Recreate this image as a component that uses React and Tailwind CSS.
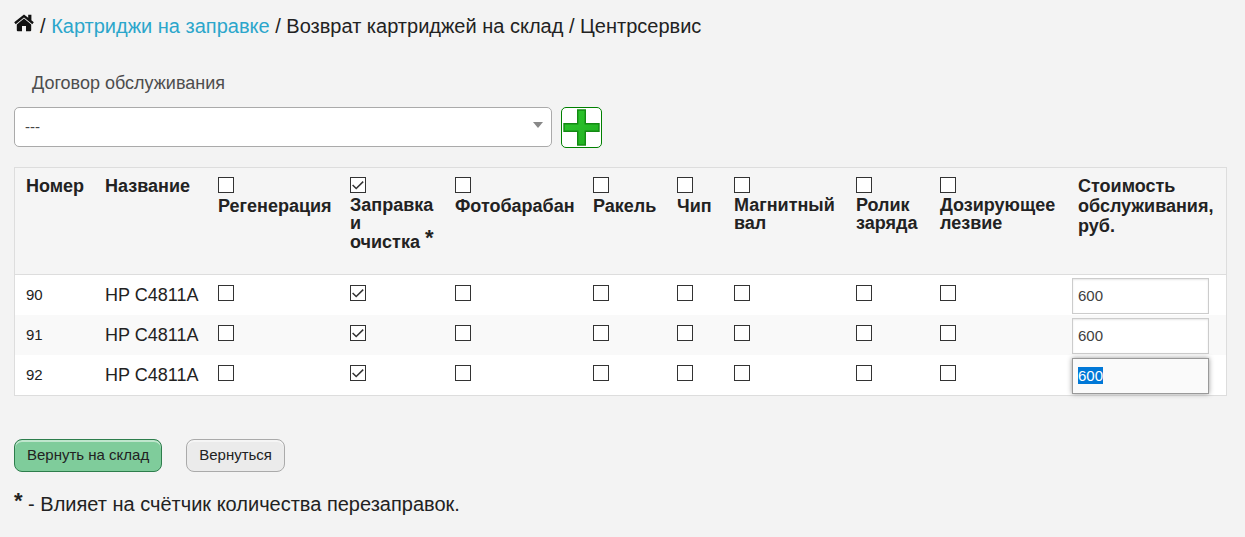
import React, { useEffect, useRef } from 'react';

const services = [
    { id: 'regeneration', label: 'Регенерация',       width: 'w-[132px]', leading: 'leading-5' },
    { id: 'refill',       label: 'Заправка и',        width: 'w-[105px]', leading: 'leading-[18px]', checked: true, marked: 'очистка' },
    { id: 'drum',         label: 'Фотобарабан',       width: 'w-[138px]', leading: 'leading-5' },
    { id: 'blade',        label: 'Ракель',            width: 'w-[84px]',  leading: 'leading-5' },
    { id: 'chip',         label: 'Чип',               width: 'w-[57px]',  leading: 'leading-5' },
    { id: 'magnet',       label: 'Магнитный вал',     width: 'w-[122px]', leading: 'leading-[18px]' },
    { id: 'roller',       label: 'Ролик заряда',      width: 'w-[84px]',  leading: 'leading-[18px]' },
    { id: 'doctor',       label: 'Дозирующее лезвие', width: 'w-[138px]', leading: 'leading-[18px]' },
];

const cartridges = [
    { number: 90, name: 'HP C4811A', cost: 600 },
    { number: 91, name: 'HP C4811A', cost: 600 },
    { number: 92, name: 'HP C4811A', cost: 600 },
];

const HomeIcon = () => (
    <svg viewBox="0 0 20 18" className="w-5 h-[18px]" fill="#111">
        <path d="M10 0.4 L0.2 8.3 L1.7 10.2 L10 3.5 L18.3 10.2 L19.8 8.3 L17.4 6.3 V0.8 H14.2 V3.8 Z" />
        <path d="M10 4.6 L2.8 10.4 V16.2 Q2.8 17.2 3.8 17.2 H8 V12 H12 V17.2 H16.2 Q17.2 17.2 17.2 16.2 V10.4 Z" />
    </svg>
);

const PlusIcon = () => (
    <svg viewBox="0 0 37 37" className="w-[37px] h-[37px]">
        <defs>
            <linearGradient id="plus" x1="0" y1="0" x2="1" y2="1">
                <stop offset="0" stopColor="#2fc82f" />
                <stop offset="1" stopColor="#1fae1f" />
            </linearGradient>
        </defs>
        <path
            d="M14.7 1 H22.3 V14.7 H36 V22.3 H22.3 V36 H14.7 V22.3 H1 V14.7 H14.7 Z"
            fill="url(#plus)"
            stroke="#138a13"
            strokeWidth="1.4"
        />
    </svg>
);

const Checkbox = ({ id, label, checked }) => (
    <span className="grid w-4 h-4">
        <input
            id={id}
            type="checkbox"
            aria-label={label}
            defaultChecked={checked}
            className="peer col-start-1 row-start-1 appearance-none w-4 h-4 border border-[#333] bg-white"
        />
        <svg
            viewBox="0 0 16 16"
            className="col-start-1 row-start-1 w-4 h-4 pointer-events-none invisible peer-checked:visible"
            fill="none"
            stroke="#333"
            strokeWidth="1.5"
        >
            <path d="M2.6 8 L6.2 11.5 L13.2 4.6" />
        </svg>
    </span>
);

// Marks the service that counts as a refill
const Asterisk = () => <b className="text-[22px] leading-3 align-[3px]">*</b>;

const App = () => {
    const costRef = useRef(null);

    // The last cost field is ready for typing as soon as the page opens
    useEffect(() => {
        costRef.current.focus();
        costRef.current.select();
    }, []);

    return (
        <div className="min-h-screen bg-[#f3f3f3] pl-3.5 pr-[18px] pt-3.5 text-[#222] font-['Liberation_Sans',Arial,sans-serif]">
            <nav className="flex items-start gap-1.5 text-xl leading-6">
                <a href="#home" aria-label="Главная"><HomeIcon /></a>
                <span>
                    / <a href="#cartridges" className="text-[#2ba6cb]">Картриджи на заправке</a> / Возврат картриджей на склад / Центрсервис
                </span>
            </nav>

            <form>
                <label htmlFor="contract" className="block mt-[33px] ml-[18px] text-lg leading-6 text-[#4d4d4d]">
                    Договор обслуживания
                </label>
                <div className="flex gap-[9px] mt-3">
                    <div className="relative w-[538px]">
                        <select
                            id="contract"
                            className="appearance-none w-full h-10 px-2.5 text-[15px] text-[#444] bg-white border border-[#aaa] rounded-[5px]"
                        >
                            <option>---</option>
                        </select>
                        <svg viewBox="0 0 10 6" className="absolute right-[9px] top-[15px] w-2.5 h-1.5 pointer-events-none" fill="#888">
                            <path d="M0 0 H10 L5 6 Z" />
                        </svg>
                    </div>
                    <button
                        type="button"
                        aria-label="Добавить договор"
                        className="flex items-center justify-center w-[41px] h-[41px] bg-white border border-[#008000] rounded-[5px]"
                    >
                        <PlusIcon />
                    </button>
                </div>

                <table className="table-fixed w-full mt-[19px] border border-[#ddd] border-separate border-spacing-0 bg-white text-lg">
                    <thead className="bg-[#f5f5f5]">
                        <tr className="h-[107px] text-left align-top">
                            <th className="w-[79px] pl-[11px] pt-2 leading-5 border-b border-[#ddd]">Номер</th>
                            <th className="w-[113px] pl-[11px] pt-2 leading-5 border-b border-[#ddd]">Название</th>
                            {services.map((s) => (
                                <th key={s.id} className={`${s.width} pl-[11px] pt-[9px] border-b border-[#ddd]`}>
                                    <Checkbox id={s.id} checked={s.checked} />
                                    <label htmlFor={s.id} className={`block mt-[3px] ${s.leading}`}>
                                        {s.label}
                                        {s.marked && (
                                            <>
                                                {' '}
                                                <span className="whitespace-nowrap">{s.marked} <Asterisk /></span>
                                            </>
                                        )}
                                    </label>
                                </th>
                            ))}
                            <th className="pl-[11px] pt-2 leading-5 border-b border-[#ddd]">Стоимость обслуживания, руб.</th>
                        </tr>
                    </thead>
                    <tbody>
                        {cartridges.map((c, i) => (
                            <tr key={c.number} className="h-10 even:bg-[#f9f9f9]">
                                <td className="pl-[11px] text-[15px]">{c.number}</td>
                                <td className="pl-[11px]">{c.name}</td>
                                {services.map((s) => (
                                    <td key={s.id} className="pl-[11px] pb-1">
                                        <Checkbox label={`${s.label}, ${c.number}`} checked={s.checked} />
                                    </td>
                                ))}
                                <td className="pl-[5px] pr-[17px] pt-0.5">
                                    <input
                                        ref={i === cartridges.length - 1 ? costRef : null}
                                        type="text"
                                        aria-label={`Стоимость обслуживания, ${c.number}`}
                                        defaultValue={c.cost}
                                        className="block w-full h-9 px-[5px] pb-0.5 text-[15px] text-[#404040] bg-white border border-[#ccc] shadow-[inset_0_1px_2px_rgba(0,0,0,0.1)] outline-none focus:bg-[#fafafa] focus:border-[#999] focus:shadow-[0_0_5px_#999] selection:bg-[#0078d7] selection:text-white"
                                    />
                                </td>
                            </tr>
                        ))}
                    </tbody>
                </table>

                <div className="flex gap-6 mt-[43px] text-[15px]">
                    <button
                        type="submit"
                        className="h-[33px] px-3 border border-[#2d7d4c] rounded-lg bg-[#7fcc9b] shadow-[inset_0_2px_0_rgba(255,255,255,0.5)]"
                    >
                        Вернуть на склад
                    </button>
                    <button
                        type="button"
                        className="h-[33px] px-3 border border-[#aaa] rounded-lg bg-[#ebebeb] shadow-[inset_0_2px_0_rgba(255,255,255,0.5)]"
                    >
                        Вернуться
                    </button>
                </div>
            </form>

            <p className="mt-5 text-xl leading-6">
                <Asterisk /> - Влияет на счётчик количества перезаправок.
            </p>
        </div>
    );
};

export default App;
